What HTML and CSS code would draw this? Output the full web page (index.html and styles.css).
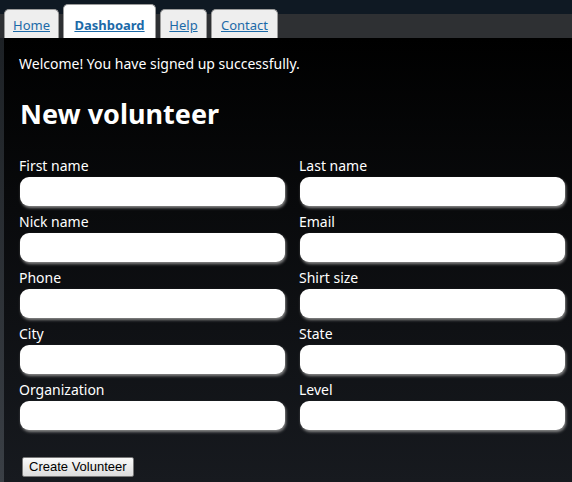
FILE: index.html
```html
<!DOCTYPE html>
<html>
<head>
<meta charset="utf-8">
<link rel="stylesheet" href="styles.css">
</head>
<body>
<div class="header">
  <nav class="tabs">
    <a class="tab tab-home" href="#">Home</a>
    <a class="tab tab-active" href="#">Dashboard</a>
    <a class="tab tab-help" href="#">Help</a>
    <a class="tab tab-contact" href="#">Contact</a>
  </nav>
</div>
<div class="main">
  <p class="notice">Welcome! You have signed up successfully.</p>
  <h1 class="title">New volunteer</h1>
  <form class="form">
    <div class="grid">
      <div class="field"><label>First name</label><input type="text"></div>
      <div class="field"><label>Last name</label><input type="text"></div>
      <div class="field"><label>Nick name</label><input type="text"></div>
      <div class="field"><label>Email</label><input type="text"></div>
      <div class="field"><label>Phone</label><input type="text"></div>
      <div class="field"><label>Shirt size</label><input type="text"></div>
      <div class="field"><label>City</label><input type="text"></div>
      <div class="field"><label>State</label><input type="text"></div>
      <div class="field"><label>Organization</label><input type="text"></div>
      <div class="field"><label>Level</label><input type="text"></div>
    </div>
    <div class="actions"><button type="button" class="submit">Create Volunteer</button></div>
  </form>
</div>
</body>
</html>
```
FILE: styles.css
```css
html, body {
  margin: 0;
  padding: 0;
}
body {
  width: 572px;
  height: 482px;
  overflow: hidden;
  background: linear-gradient(#1a1e22, #3a3f45);
  font-family: "Noto Sans", sans-serif;
  color: #fff;
}
.header {
  height: 38px;
  background: linear-gradient(#0f1923 0, #0f1923 14px, #2e3033 14px, #2e3033 100%);
}
.tabs {
  display: flex;
  align-items: flex-end;
  height: 38px;
  padding-left: 4px;
  gap: 4px;
}
.tab {
  display: flex;
  justify-content: center;
  align-items: center;
  box-sizing: border-box;
  height: 29px;
  padding-top: 1px;
  background: #eeeeee;
  border: 1px solid #9a9a9a;
  border-bottom: none;
  border-radius: 5px 5px 0 0;
  color: #1c6aa8;
  font-size: 13px;
  text-decoration: underline;
}
.tab-home { width: 55px; }
.tab-help { width: 47px; }
.tab-contact { width: 67px; }
.tab-active {
  width: 93px;
  height: 34px;
  padding-top: 6px;
  background: #fff;
  font-weight: bold;
}
.main {
  margin-left: 4px;
  height: 444px;
  box-sizing: border-box;
  padding: 16px 0 0 15px;
  background: linear-gradient(#000, #171a1f);
}
.notice {
  margin: 0;
  font-size: 14px;
  line-height: 20px;
}
.title {
  margin: 20px 0 0 1px;
  font-size: 27px;
  line-height: 40px;
  font-weight: bold;
}
.form {
  margin-top: 23px;
}
.grid {
  display: grid;
  grid-template-columns: 280px 280px;
  row-gap: 7px;
}
.field {
  display: flex;
  flex-direction: column;
}
.field label {
  font-size: 14px;
  line-height: 18px;
}
.field input {
  box-sizing: border-box;
  width: 265px;
  height: 29px;
  margin: 2px 0 0 1px;
  border: none;
  border-radius: 9px;
  background: #fff;
  box-shadow: 1px 2px 3px #888;
}
.actions {
  margin-top: 24px;
  padding-left: 3px;
}
.submit {
  font-family: "Liberation Sans", Arial, sans-serif;
  font-size: 13px;
  height: 20px;
  padding: 0 6px;
  border: 1px solid #777;
  border-radius: 2px;
  background: linear-gradient(#fafafa, #dcdcdc);
  color: #000;
}
```
